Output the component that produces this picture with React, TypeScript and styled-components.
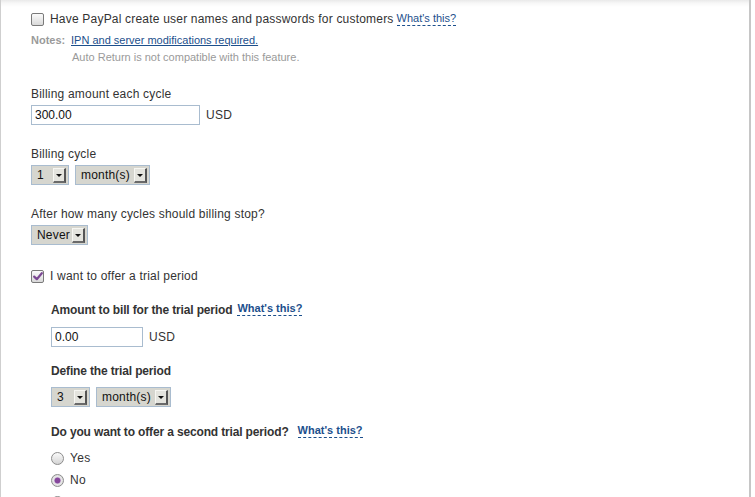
import React from "react";
import styled, { createGlobalStyle } from "styled-components";

const GlobalStyle = createGlobalStyle`
  html, body { margin: 0; padding: 0; background: #fff; }
  body { font-family: "Liberation Sans", Arial, sans-serif; color: #333; }
`;

const Page = styled.div`
  box-sizing: border-box;
  width: 751px;
  height: 497px;
  overflow: hidden;
  border-left: 1px solid #cfcfcf;
  border-right: 2px solid #c6c6c6;
  background: linear-gradient(#e9e9e9 0px, #f7f7f7 3px, #fff 7px);
  padding: 11px 0 0 30px;
`;

const CheckRow = styled.label<{ $top?: number }>`
  display: flex;
  align-items: center;
  height: 16px;
  margin-top: ${(p) => p.$top ?? 0}px;
  font-size: 12px;
  letter-spacing: 0.2px;
  color: #333;
  white-space: nowrap;
`;

const Box = styled.span<{ $checked?: boolean }>`
  box-sizing: border-box;
  width: 13px;
  height: 13px;
  margin-right: 6px;
  border: 1px solid #7a7a7a;
  border-radius: 2px;
  background: linear-gradient(#fbfbfb, #d9d9d9);
  display: flex;
  align-items: center;
  justify-content: center;
  flex: none;
`;

const HelpLink = styled.a<{ $gap: number; $bold?: boolean }>`
  font-size: 11px;
  font-weight: ${(p) => (p.$bold ? 700 : 400)};
  letter-spacing: 0;
  color: #1c4f8c;
  text-decoration: none;
  border-bottom: 1px dashed #1c4f8c;
  line-height: 13px;
  margin-left: ${(p) => p.$gap}px;
  cursor: pointer;
`;

const NotesRow = styled.div`
  display: flex;
  margin-top: 6px;
  line-height: 14px;
  font-size: 11px;
  white-space: nowrap;
`;

const NotesLabel = styled.span`
  width: 40px;
  font-weight: 700;
  color: #9a9a9a;
  flex: none;
`;

const NoteLink = styled.a`
  color: #1c4f8c;
  text-decoration: underline;
`;

const NoteText = styled.div`
  margin: 3px 0 0 41px;
  line-height: 14px;
  font-size: 11px;
  color: #9a9a9a;
  white-space: nowrap;
`;

const FieldLabel = styled.div<{ $top: number; $bold?: boolean; $gap?: number }>`
  display: flex;
  align-items: flex-start;
  margin-top: ${(p) => p.$top}px;
  margin-bottom: ${(p) => p.$gap ?? 5}px;
  line-height: 16px;
  height: 14px;
  font-size: 12px;
  font-weight: ${(p) => (p.$bold ? 700 : 400)};
  letter-spacing: ${(p) => (p.$bold ? "-0.15px" : "0.2px")};
  color: #333;
  white-space: nowrap;
`;

const InputRow = styled.div`
  display: flex;
  align-items: center;
  gap: 6px;
  height: 20px;
`;

const TextInput = styled.input<{ $w: number }>`
  box-sizing: border-box;
  width: ${(p) => p.$w}px;
  height: 20px;
  border: 1px solid #a9bccf;
  padding: 0 3px;
  margin: 0;
  font-family: "Liberation Sans", Arial, sans-serif;
  font-size: 12px;
  color: #111;
  outline: none;
`;

const Unit = styled.span`
  font-size: 12px;
  letter-spacing: 0.3px;
  color: #333;
`;

const SelectRow = styled.div`
  display: flex;
  gap: 6px;
  height: 20px;
`;

const Select = styled.div<{ $w: number }>`
  box-sizing: border-box;
  width: ${(p) => p.$w}px;
  height: 20px;
  border: 1px solid #a9bccf;
  background: #d6d6cf;
  display: flex;
  align-items: center;
  justify-content: space-between;
  padding: 0 2px 0 5px;
  font-size: 12px;
  letter-spacing: 0.2px;
  color: #111;
`;

const Arrow = styled.span`
  box-sizing: border-box;
  width: 13px;
  height: 15px;
  background: #e4e4de;
  border-top: 1px solid #f6f6f2;
  border-left: 1px solid #f6f6f2;
  border-right: 2px solid #555;
  border-bottom: 2px solid #6a6a6a;
  display: flex;
  align-items: center;
  justify-content: center;
  &::after {
    content: "";
    width: 0;
    height: 0;
    border-left: 3px solid transparent;
    border-right: 3px solid transparent;
    border-top: 3px solid #111;
    margin-top: 1px;
  }
`;

const Indented = styled.div`
  margin-left: 20px;
`;

const RadioRow = styled.label<{ $top: number }>`
  display: flex;
  align-items: center;
  height: 16px;
  margin-top: ${(p) => p.$top}px;
  font-size: 12px;
  letter-spacing: 0.3px;
  color: #333;
`;

const Radio = styled.span<{ $checked?: boolean }>`
  box-sizing: border-box;
  width: 13px;
  height: 13px;
  margin-right: 6px;
  border-radius: 50%;
  border: 1px solid #8c8c8c;
  background: ${(p) =>
    p.$checked
      ? "radial-gradient(circle, #86479c 0 2.6px, #c9b3d2 3.2px, #e8e8e8 3.8px, #d2d2d2 100%)"
      : "linear-gradient(#fafafa, #d4d4d4)"};
  flex: none;
`;

const Check = () => (
  <svg width="10" height="9" viewBox="0 0 10 9">
    <path d="M1.2 4.6 L3.8 7.2 L8.8 1.2" fill="none" stroke="#7b4893" strokeWidth="2.2" strokeLinecap="round" strokeLinejoin="round" />
  </svg>
);

export default function App() {
  return (
    <>
      <GlobalStyle />
      <Page>
        <CheckRow>
          <Box />
          Have PayPal create user names and passwords for customers
          <HelpLink $gap={3}>What's this?</HelpLink>
        </CheckRow>
        <NotesRow>
          <NotesLabel>Notes:</NotesLabel>
          <NoteLink>IPN and server modifications required.</NoteLink>
        </NotesRow>
        <NoteText>Auto Return is not compatible with this feature.</NoteText>

        <FieldLabel $top={22}>Billing amount each cycle</FieldLabel>
        <InputRow>
          <TextInput $w={169} defaultValue="300.00" />
          <Unit>USD</Unit>
        </InputRow>

        <FieldLabel $top={21}>Billing cycle</FieldLabel>
        <SelectRow>
          <Select $w={38}>1<Arrow /></Select>
          <Select $w={75}>month(s)<Arrow /></Select>
        </SelectRow>

        <FieldLabel $top={21}>After how many cycles should billing stop?</FieldLabel>
        <SelectRow>
          <Select $w={57}>Never<Arrow /></Select>
        </SelectRow>

        <CheckRow $top={23}>
          <Box $checked><Check /></Box>
          I want to offer a trial period
        </CheckRow>

        <Indented>
          <FieldLabel $top={18} $bold $gap={11}>
            Amount to bill for the trial period
            <HelpLink $bold $gap={5}>What's this?</HelpLink>
          </FieldLabel>
          <InputRow>
            <TextInput $w={92} defaultValue="0.00" />
            <Unit>USD</Unit>
          </InputRow>

          <FieldLabel $top={16} $bold $gap={10}>Define the trial period</FieldLabel>
          <SelectRow>
            <Select $w={39}>3<Arrow /></Select>
            <Select $w={75}>month(s)<Arrow /></Select>
          </SelectRow>

          <FieldLabel $top={17} $bold $gap={0}>
            Do you want to offer a second trial period?
            <HelpLink $bold $gap={9}>What's this?</HelpLink>
          </FieldLabel>
          <RadioRow $top={12}><Radio />Yes</RadioRow>
          <RadioRow $top={6}><Radio $checked />No</RadioRow>
          <RadioRow $top={6}><Radio /></RadioRow>
        </Indented>
      </Page>
    </>
  );
}
